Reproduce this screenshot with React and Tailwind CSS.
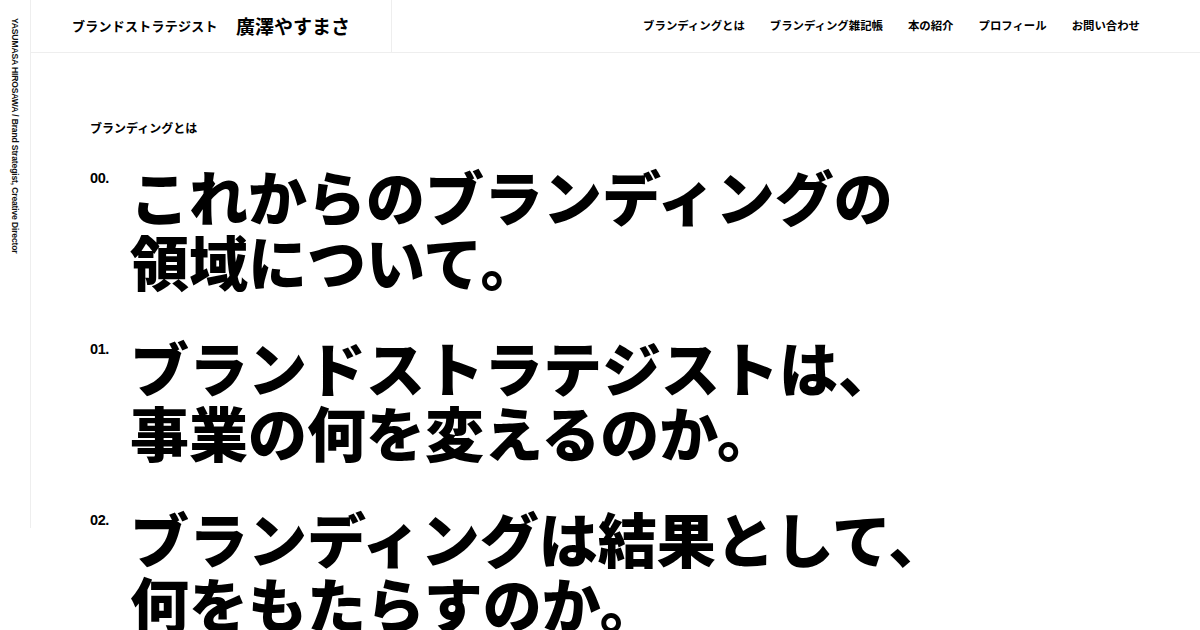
const items = [
  { num: '00.', lines: ['これからのブランディングの', '領域について。'] },
  { num: '01.', lines: ['ブランドストラテジストは、', '事業の何を変えるのか。'] },
  { num: '02.', lines: ['ブランディングは結果として、', '何をもたらすのか。'] },
];

const nav = ['ブランディングとは', 'ブランディング雑記帳', '本の紹介', 'プロフィール', 'お問い合わせ'];

const jp = { fontFamily: '"Noto Sans CJK JP", "Noto Sans", sans-serif' };
const latin = { fontFamily: '"Liberation Sans", Arial, sans-serif' };

export default function App() {
  return (
    <div className="w-[1200px] h-[630px] overflow-hidden bg-white text-black flex" style={jp}>
      <aside className="w-[31px] shrink-0">
        <div className="h-[528px] border-r border-[#eeeeee] flex justify-center pt-[18px]">
          <p
            className="text-[8.6px] font-bold leading-none tracking-[-0.02em] text-[#111]"
            style={{ ...latin, writingMode: 'vertical-rl' }}
          >
            YASUMASA HIROSAWA / Brand Strategist, Creative Director
          </p>
        </div>
      </aside>

      <div className="flex-1 flex flex-col">
        <header className="h-[53px] shrink-0 flex border-b border-[#eeeeee]">
          <div className="w-[361px] border-r border-[#eeeeee] flex items-center pl-[41px] gap-[18px]">
            <span className="text-[13px] font-bold tracking-[0.02em]">ブランドストラテジスト</span>
            <span className="text-[19px] font-bold">廣澤やすまさ</span>
          </div>
          <nav className="flex-1 flex items-center justify-end gap-[25px] pr-[60px]">
            {nav.map((n) => (
              <a key={n} className="text-[11.4px] font-bold">{n}</a>
            ))}
          </nav>
        </header>

        <main className="pl-[59px] pt-[69px]">
          <p className="text-[12px] font-bold leading-none">ブランディングとは</p>
          <div className="mt-[29px] flex flex-col gap-[41px]">
            {items.map(({ num, lines }) => (
              <section key={num} className="flex">
                <span className="w-[40px] shrink-0 text-[14.5px] font-bold tracking-[-0.03em] leading-none pt-[8px]" style={latin}>
                  {num}
                </span>
                <h2 className="text-[59px] font-black leading-[65px]">
                  {lines.map((l) => (
                    <span key={l} className="block">{l}</span>
                  ))}
                </h2>
              </section>
            ))}
          </div>
        </main>
      </div>
    </div>
  );
}
